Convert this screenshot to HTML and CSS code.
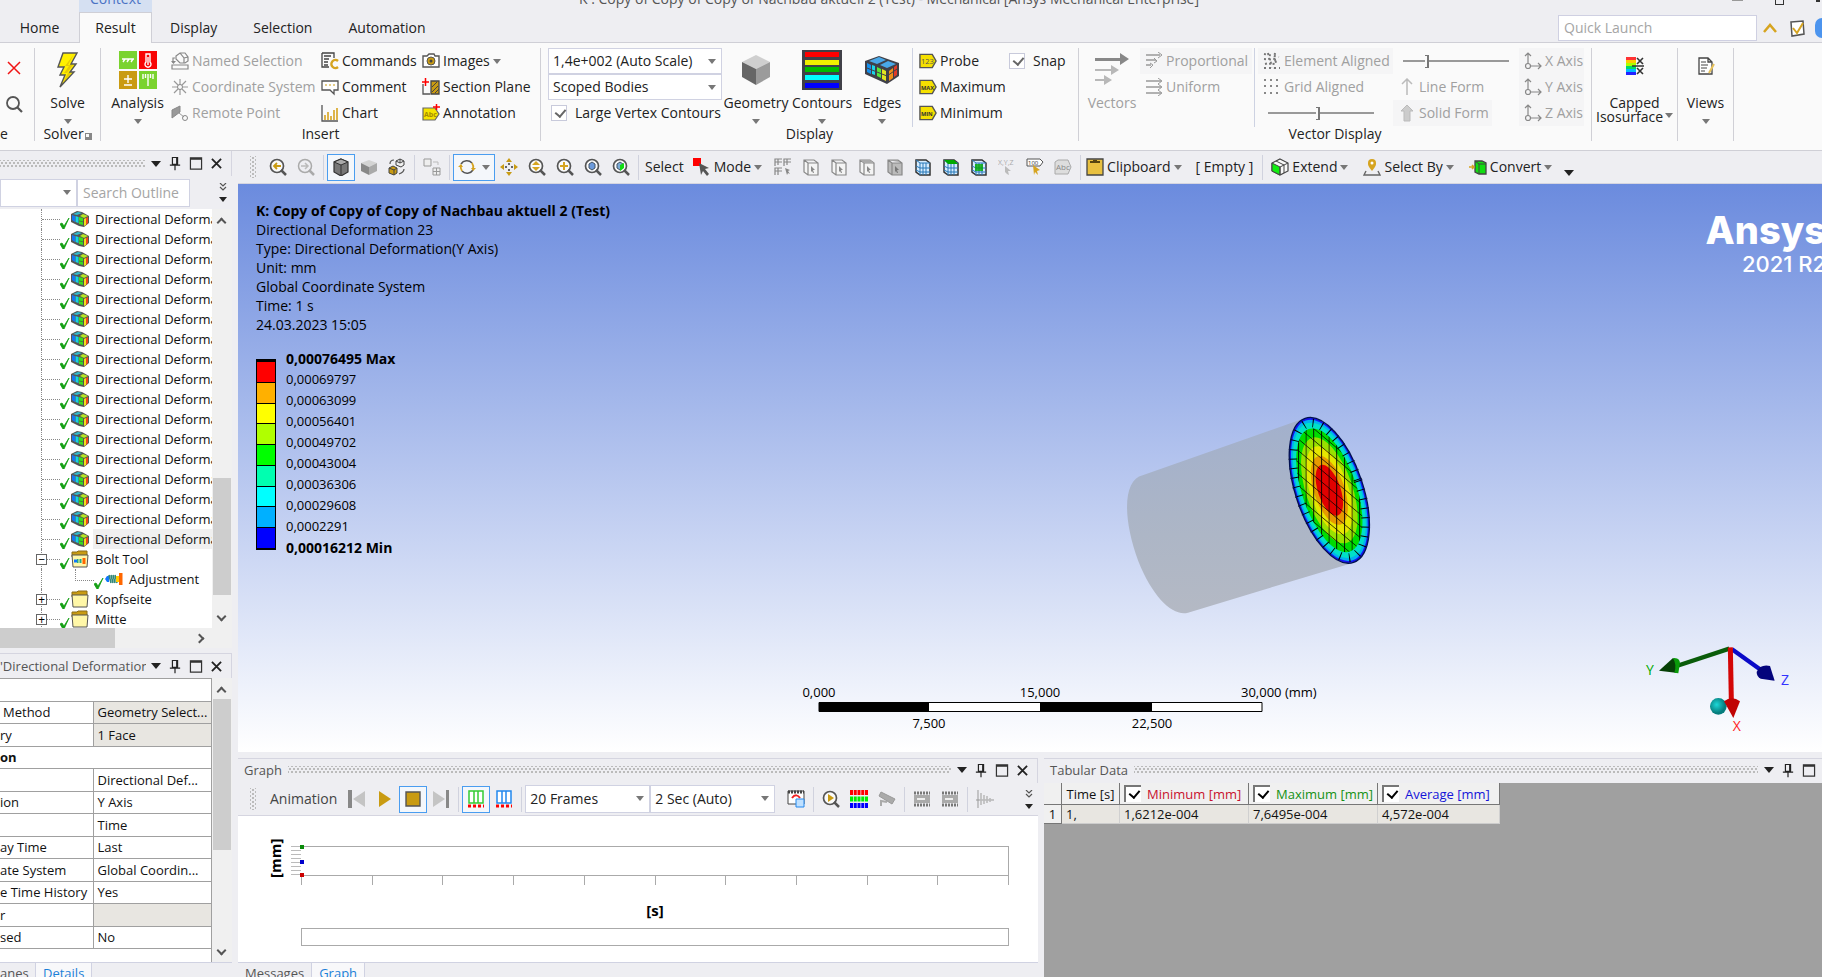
FILE: index.html
```html
<!DOCTYPE html>
<html lang="en">
<head>
    <meta charset="UTF-8">
    <meta name="viewport" content="width=device-width, initial-scale=1.0">
    <title>Mechanical</title>
    <link rel="stylesheet" href="styles.css">
</head>
<body>
    <!-- Icon sprite -->
    <svg class="sprite" aria-hidden="true">
        <symbol id="i-cross" viewBox="0 0 18 18"><path d="M3 3l12 12M15 3L3 15" stroke="#f01414" stroke-width="1.5" fill="none"/></symbol>
        <symbol id="i-search" viewBox="0 0 18 18"><g fill="none" stroke="#555"><circle cx="8" cy="8" r="6" stroke-width="1.8"/><path d="M12 12l5 5" stroke-width="2.2"/></g></symbol>
        <symbol id="i-bolt" viewBox="0 0 24 36"><path d="M7 1h14l-6 11h5l-6 8h4L4 35l5-12H4l4-8H2z" fill="#fff000" stroke="#555" stroke-width="1.4"/><path d="M18 2l-6 11h5l-6 8h4L7 31l5-10H8l5-7H9z" fill="#c99c10" opacity=".45"/></symbol>
        <symbol id="i-analysis" viewBox="0 0 38 38"><path d="M0 0h18v18H0zM20 20h18v18H20z" fill="#7ad32e"/><path d="M20 0h18v18H20z" fill="#f80505"/><path d="M0 20h18v18H0z" fill="#c99b12"/><g fill="none" stroke="#fff" stroke-width="1.4"><path d="M3 8h12M6 8l-2 3M10 8l-2 3M14 8l-2 3M5 28h8M9 24v8M5 34h8M29 23v12M24 23v5M34 23v5M26.5 23v4M31.5 23v4"/><path d="M27 3h4v8a3 3 0 1 1-4 0zM29 6v8"/></g></symbol>
        <symbol id="i-named" viewBox="0 0 18 18"><g fill="none" stroke="#888" stroke-width="1.2"><path d="M5 4l4-3h5l3 4v4l-3 2H9L5 7zM9 1l4 5v5M13 6l4-1M1 13h16v4H1zM2 11V6h2"/></g><path d="M0 9h5l-2.500 3z" fill="#888"/></symbol>
        <symbol id="i-coord" viewBox="0 0 18 18"><path d="M9 1v16M1 9h16M3 3l12 12M15 3L3 15" stroke="#999" stroke-width="1.2"/><circle cx="9" cy="9" r="2.5" fill="#fafafa" stroke="#888"/></symbol>
        <symbol id="i-remote" viewBox="0 0 18 18"><path d="M1 6l8-4v6l-8 6z" fill="#999" stroke="#888"/><path d="M8 9l5 4" stroke="#999"/><circle cx="14" cy="14" r="2.5" fill="none" stroke="#888"/></symbol>
        <symbol id="i-commands" viewBox="0 0 18 18"><path d="M1 1h12v5M1 1v14h7" fill="none" stroke="#444" stroke-width="1.3"/><path d="M3 4h7M3 7h5M3 10h4M3 13h4" stroke="#444" stroke-width="1.3"/><path d="M17 9a4 4 0 1 0 0 6" fill="none" stroke="#d6a420" stroke-width="2.4"/></symbol>
        <symbol id="i-comment" viewBox="0 0 18 18"><path d="M1 3h16v9h-4v4l-4-4H1z" fill="#fff" stroke="#555" stroke-width="1.3"/><path d="M4 7h2M8 7h2M12 7h2" stroke="#c99b12"/></symbol>
        <symbol id="i-chart" viewBox="0 0 18 18"><path d="M1 1v16h16" fill="none" stroke="#555" stroke-width="1.3"/><path d="M4 11v5M7 8v8M10 12v4M13 6v10M16 4v12" stroke="#d6a420" stroke-width="1.6"/></symbol>
        <symbol id="i-images" viewBox="0 0 18 18"><path d="M1 4h4l2-2h5l1 2h4v11H1z" fill="#fff" stroke="#555" stroke-width="1.4"/><circle cx="9" cy="9" r="4" fill="#c99b12" stroke="#555"/><circle cx="9" cy="9" r="1.5" fill="#444"/></symbol>
        <symbol id="i-section" viewBox="0 0 18 18"><path d="M1 6v10h7" fill="none" stroke="#555" stroke-width="1.3"/><path d="M9 3h8v13H9z" fill="#c99b12" stroke="#444" stroke-width="1.3"/><path d="M10 9l5-5M10 14l6-6M13 15l4-4" stroke="#444"/><path d="M0 4h7M3.5 0v8" stroke="#f00" stroke-width="1.5"/></symbol>
        <symbol id="i-annot" viewBox="0 0 18 18"><path d="M1 4h12l4 6-4 6H1z" fill="#f5e400" stroke="#666" stroke-width="1.2"/><text x="2" y="13" font-size="7" font-weight="bold" fill="#a58b00">Abc</text><path d="M11 3h7M14.5 0v6" stroke="#f00" stroke-width="1.5"/></symbol>
        <symbol id="i-cube" viewBox="0 0 30 30"><path d="M15 0l14 7-14 7L1 7z" fill="#cfcfcf"/><path d="M1 7l14 7v16L1 22z" fill="#666"/><path d="M29 7l-14 7v16l14-8z" fill="#9b9b9b"/></symbol>
        <symbol id="i-contours" viewBox="0 0 40 40"><path d="M0 0h40v40H0z" fill="#404048"/><path d="M3 2h34v5H3z" fill="#f00"/><path d="M3 10h34v5H3z" fill="#f0f000"/><path d="M3 17h34v5H3z" fill="#0b0"/><path d="M3 25h34v5H3z" fill="#0ff"/><path d="M3 33h34v5H3z" fill="#00f"/></symbol>
        <symbol id="i-edges" viewBox="0 0 36 30"><path d="M1 6l14-5 20 7v13l-12 8L1 19z" fill="#404048"/><path d="M5 6l10-4 7 3-9 4zM16 10l8-4 8 3-9 4z" fill="#49a8e8"/><path d="M3 8l4 2v9l-4-2z" fill="#1590ee"/><path d="M8 10l3 1v9l-3-1z" fill="#1ad7e8"/><path d="M13 12l4 2v9l-4-2z" fill="#57e83a"/><path d="M18 14l4 2v10l-4-2z" fill="#e3e620"/><path d="M25 16l4-3v10l-4 3z" fill="#f09018"/><path d="M30 12l3-2v10l-3 2z" fill="#e23b28"/><path d="M3 13l20 8 10-7" fill="none" stroke="#404048" stroke-width="1"/></symbol>
        <symbol id="i-probe" viewBox="0 0 19 16"><path d="M1 1h13l4 7-4 7H1z" fill="#f5e000" stroke="#555" stroke-width="1.5"/><text x="2" y="11" font-size="8" fill="#555">123</text></symbol>
        <symbol id="i-max" viewBox="0 0 19 16"><path d="M1 1h13l4 7-4 7H1z" fill="#f5e000" stroke="#555" stroke-width="1.5"/><text x="2" y="11" font-size="6" font-weight="bold" fill="#333">MAX</text></symbol>
        <symbol id="i-min" viewBox="0 0 19 16"><path d="M1 1h13l4 7-4 7H1z" fill="#f5e000" stroke="#555" stroke-width="1.5"/><text x="2" y="11" font-size="6" font-weight="bold" fill="#333">MIN</text></symbol>
        <symbol id="i-vectors" viewBox="0 0 34 34"><path d="M0 5h25V0l9 6-9 6V8H0z" fill="#888"/><path d="M0 16h16v-4l8 5-8 5v-4H0zM0 26h9v-4l8 5-8 5v-4H0z" fill="#b8b8b8"/></symbol>
        <symbol id="i-prop" viewBox="0 0 18 18"><g stroke="#999" fill="none"><path d="M1 3h14M1 8h10M1 13h5" stroke-width="1.3"/><path d="M13 0l4 3-4 3M9 6l3 3-3 2M5 11l3 2-3 3"/></g></symbol>
        <symbol id="i-uniform" viewBox="0 0 18 18"><g stroke="#999" fill="none"><path d="M1 3h15M1 9h15M1 15h15" stroke-width="1.3"/><path d="M13 0l4 3-4 3M13 12l4 3-4 3M13 6l4 3-4 3"/></g></symbol>
        <symbol id="i-elem" viewBox="0 0 18 18"><g stroke="#777" stroke-width="2" stroke-dasharray="2 3" fill="none"><path d="M1 2l15 3M1 7l15 1M2 12l14-3M1 16h16M5 1l3 15M12 1l-2 15"/></g></symbol>
        <symbol id="i-grid" viewBox="0 0 18 18"><g stroke="#888" stroke-width="2" stroke-dasharray="2 4" fill="none"><path d="M1 2h16M1 8h16M1 15h16"/></g></symbol>
        <symbol id="i-line" viewBox="0 0 18 18"><path d="M9 17V1M4 6l5-5 5 5" stroke="#bbb" stroke-width="1.5" fill="none"/></symbol>
        <symbol id="i-solid" viewBox="0 0 18 18"><path d="M9 1l6 6h-3v10H6V7H3z" fill="#ccc" stroke="#bbb"/></symbol>
        <symbol id="i-axis" viewBox="0 0 18 18"><g stroke="#888" fill="none" stroke-width="1.2"><path d="M4 12V1M1 4l3-3 3 3M7 14h10M14 11l3 3-3 3"/><circle cx="4" cy="14" r="2.5"/></g></symbol>
        <symbol id="i-capped" viewBox="0 0 18 18"><path d="M0 0h10v4H0z" fill="#f33"/><path d="M0 3h10v4H0z" fill="#fc0"/><path d="M0 6h10v3H0z" fill="#af0"/><path d="M0 9h10v3H0z" fill="#0d6"/><path d="M0 12h10v3H0z" fill="#0bf"/><path d="M0 15h10v3H0z" fill="#22f"/><path d="M11 1l6 6M17 1l-6 6M11 11l6 6M17 11l-6 6M6 9h12" stroke="#333" stroke-width="1.6"/></symbol>
        <symbol id="i-views" viewBox="0 0 18 18"><path d="M2 1h9l4 4v12H2zM11 1v4h4" fill="#fff" stroke="#444" stroke-width="1.3"/><path d="M4 5h5M4 8h7M4 11h6M4 14h4" stroke="#444"/><path d="M17 7l-5 9" stroke="#e8c25a" stroke-width="2"/></symbol>
        <symbol id="i-up" viewBox="0 0 14 10"><path d="M1 9l6-7 6 7" fill="none" stroke="#d6a420" stroke-width="2.5"/></symbol>
        <symbol id="i-clipcheck" viewBox="0 0 18 18"><path d="M3 3l12-1 1 13-12 2z" fill="#fff" stroke="#555" stroke-width="1.5"/><path d="M5 9l4 5 6-10" stroke="#d6a420" stroke-width="2" fill="none"/></symbol>
        <symbol id="i-pin" viewBox="0 0 14 16"><path d="M4 1h6v8H4zM9 1v8M1 10h12M7 10v6" fill="none" stroke="#222" stroke-width="1.4"/></symbol>
        <symbol id="i-box" viewBox="0 0 14 14"><path d="M1 1h12v12H1z" fill="none" stroke="#333" stroke-width="1.3"/><path d="M1 2h12" stroke="#333" stroke-width="2"/></symbol>
        <symbol id="i-x" viewBox="0 0 12 12"><path d="M1 1l10 10M11 1L1 11" stroke="#222" stroke-width="2"/></symbol>
        <symbol id="i-chevs" viewBox="0 0 8 8"><path d="M1 0l3 3 3-3M1 4l3 3 3-3" fill="none" stroke="#555" stroke-width="1.2"/></symbol>
        <symbol id="i-tri" viewBox="0 0 10 6"><path d="M0 0h10L5 6z" fill="currentColor"/></symbol>
        <symbol id="i-check" viewBox="0 0 10 12"><path d="M0 7l2-1 2 3 5-8-5 11H3z" fill="#14a014" stroke="#14a014" stroke-width=".8"/></symbol>
        <symbol id="i-def" viewBox="0 0 18 16"><path d="M0 3l6-3 5 1 7 4v7l-5 4-5-1-8-4z" fill="#555"/><path d="M1 4l3 1v6l-3-2z" fill="#1877f0"/><path d="M4.500 5l3 1v6l-3-1z" fill="#16d3e6"/><path d="M2 3l5-2 4 1-5 2z" fill="#3bc"/><path d="M8 6l4 1v7l-4-1z" fill="#3bdc1e"/><path d="M9 5l3-2 5 2-4 2z" fill="#b6e522"/><path d="M13 8l2-1v7l-2 1z" fill="#ece21c"/><path d="M15 7l2-1v6l-2 2z" fill="#f04a1c"/><path d="M8 10l5 1" stroke="#444" stroke-width=".6"/></symbol>
        <symbol id="i-folder" viewBox="0 0 18 18"><path d="M1 2h5l1-1h9v6H1z" fill="#c99b12" stroke="#8a6d18"/><path d="M1 5h16l-1 12H2z" fill="#fff7a8" stroke="#555"/></symbol>
        <symbol id="i-bolttool" viewBox="0 0 18 18"><path d="M1 2h5l1-1h9v6H1z" fill="#c99b12" stroke="#8a6d18"/><path d="M1 5h16l-1 12H2z" fill="#fff7a8" stroke="#555"/><path d="M3 11h3" stroke="#17f" stroke-width="3"/><path d="M6 11h5" stroke="#2a8" stroke-width="4" stroke-dasharray="1 .5"/><path d="M13 8v6" stroke="#f60" stroke-width="3"/></symbol>
        <symbol id="i-adjust" viewBox="0 0 18 14"><path d="M0 7l2-3h2v6H2z" fill="#17f"/><path d="M4 3l2 8M6 3l2 8M8 3l2 8M10 3l2 8" stroke="#387" stroke-width="1.6"/><path d="M11 4h3v6h-3z" fill="#fc0"/><path d="M14 1h3.500v12H14z" fill="#f60"/></symbol>
        <symbol id="i-zprev" viewBox="0 0 18 18"><circle cx="8" cy="8" r="6.5" fill="#fafafa" stroke="#555" stroke-width="1.7"/><path d="M12 12l5 5" stroke="#555" stroke-width="2.5"/><path d="M12 8H5M8 5L5 8l3 3" fill="none" stroke="#c99b12" stroke-width="1.8"/></symbol>
        <symbol id="i-znext" viewBox="0 0 18 18"><circle cx="8" cy="8" r="6.5" fill="none" stroke="#aaa" stroke-width="1.5"/><path d="M12 12l5 5" stroke="#aaa" stroke-width="2.5"/><path d="M4 8h7M8 5l3 3-3 3" fill="none" stroke="#bbb" stroke-width="1.5"/></symbol>
        <symbol id="i-shade" viewBox="0 0 18 18"><path d="M9 1l7 3v10l-7 4-7-4V4z" fill="#777" stroke="#333" stroke-width="1.2"/><path d="M9 1l7 3-7 3-7-3z" fill="#aaa" stroke="#333"/><path d="M9 7v10" stroke="#333"/></symbol>
        <symbol id="i-softcube" viewBox="0 0 18 18"><path d="M9 2l8 3-8 4-8-4z" fill="#d4d4d4"/><path d="M1 5l8 4v8l-8-4z" fill="#888"/><path d="M17 5L9 9v8l8-4z" fill="#aaa"/></symbol>
        <symbol id="i-swap" viewBox="0 0 18 18"><path d="M8 3l4-2 4 2v4l-3 2-5-2zM12 5V1M8 3l4 2 4-2" fill="#eee" stroke="#444"/><path d="M1 10l4-2 4 2v5l-3 2-5-2z" fill="#c99b12" stroke="#444"/><path d="M1 10l5 2 3-2M6 12v5" fill="none" stroke="#444"/><path d="M2 6c0-3 2-4 4-4M16 11c0 3-2 4-5 5" fill="none" stroke="#555" stroke-width="1.2"/></symbol>
        <symbol id="i-pair" viewBox="0 0 18 18"><path d="M1 1h7v7H1zM10 10h7v7h-7zM13.5 10v7M10 13.5h7" fill="#eee" stroke="#999"/><path d="M10 4h5v3" fill="none" stroke="#bbb"/></symbol>
        <symbol id="i-rotate" viewBox="0 0 18 18"><path d="M3 6a7 7 0 0 1 11-1M15 12a7 7 0 0 1-11 1" fill="none" stroke="#555" stroke-width="1.6"/><path d="M14 5a7 7 0 0 1 1 6M4 13a7 7 0 0 1-1-6" fill="none" stroke="#d6a420" stroke-width="1.8"/><path d="M13 10h5l-3 3zM0 9l3-3 2 3z" fill="#d6a420"/></symbol>
        <symbol id="i-pan" viewBox="0 0 18 18"><g fill="#c99b12"><path d="M9 0l3 4H6zM9 18l3-4H6zM0 9l4-3v6zM18 9l-4-3v6z"/></g><path d="M9 5v2M9 11v2M5 9h2M11 9h2" stroke="#666" stroke-width="2"/></symbol>
        <symbol id="i-zoom" viewBox="0 0 18 18"><circle cx="8" cy="8" r="6.5" fill="#fafafa" stroke="#555" stroke-width="1.7"/><path d="M12 12l5 5" stroke="#555" stroke-width="2.5"/><path d="M8 3l4 4H4zM8 13l4-4H4z" fill="#d6a420"/></symbol>
        <symbol id="i-zplus" viewBox="0 0 18 18"><circle cx="8" cy="8" r="6.5" fill="#fafafa" stroke="#555" stroke-width="1.7"/><path d="M12 12l5 5" stroke="#555" stroke-width="2.5"/><path d="M8 4v8M4 8h8" stroke="#d6a420" stroke-width="2"/></symbol>
        <symbol id="i-zfit" viewBox="0 0 18 18"><circle cx="8" cy="8" r="6.5" fill="#fafafa" stroke="#555" stroke-width="1.7"/><path d="M12 12l5 5" stroke="#555" stroke-width="2.5"/><path d="M8 4l3 2v4l-3 2-3-2V6z" fill="#6d9bdc" stroke="#456"/></symbol>
        <symbol id="i-zsel" viewBox="0 0 18 18"><circle cx="8" cy="8" r="6.5" fill="#fafafa" stroke="#555" stroke-width="1.7"/><path d="M12 12l5 5" stroke="#555" stroke-width="2.5"/><path d="M8 4l3 2v4l-3 2-3-2V6z" fill="#7cacd8" stroke="#456"/><path d="M8 7l4-2v5l-4 3z" fill="#1d1"/></symbol>
        <symbol id="i-mode" viewBox="0 0 18 18"><path d="M0 0h8v8H0z" fill="#f00"/><path d="M6 5l10 5-4 1 4 5-2 2-4-5-2 4z" fill="#555"/></symbol>
        <symbol id="i-filter" viewBox="0 0 18 18"><g fill="none" stroke="#888" stroke-width="1.2"><path d="M1 8V1h7M1 4h7M4 1v6M10 8V1h7M10 4h7M13 1v6M1 17v-7h7M1 13h7M4 10v7"/></g><path d="M11 10l5 2-2 1 2 3-2-1-1 2z" fill="#888"/></symbol>
        <symbol id="i-sbox" viewBox="0 0 18 18"><path d="M2 2h10l4 3v12H6l-4-3zM2 2l4 3h10M6 5v12" fill="#f4f4f4" stroke="#888" stroke-width="1.2"/><path d="M9 8l4 4h-2l1 3h-1l-1-2-1 1z" fill="#888"/></symbol>
        <symbol id="i-sbody" viewBox="0 0 18 18"><path d="M2 2h10l4 3v12H6l-4-3zM2 2l4 3h10M6 5v12" fill="#bbb" stroke="#888" stroke-width="1.2"/><path d="M9 8l4 4h-2l1 3h-1l-1-2-1 1z" fill="#777"/></symbol>
        <symbol id="i-mesh" viewBox="0 0 18 18"><path d="M2 2h10l4 3v12H6l-4-3z" fill="#d6ecff" stroke="#333" stroke-width="1.5"/><path d="M2 2l4 3h10M6 5v12M9 5v12M12 5v12M2 8l4 2h10M2 12l4 2h10" fill="none" stroke="#2878b8"/></symbol>
        <symbol id="i-xyz" viewBox="0 0 18 18"><text x="0" y="7" font-size="7" fill="#aaa">X,Y,Z</text><path d="M7 8l6 5h-3l1 4-2-1-2-2z" fill="#bbb"/></symbol>
        <symbol id="i-tag" viewBox="0 0 18 18"><path d="M1 1h13l3 3-3 4H1z" fill="#fff" stroke="#555"/><text x="2" y="7" font-size="6" fill="#333">100</text><path d="M7 7l7 5-3 1 1 4-3-3-1 3z" fill="#d6a420"/></symbol>
        <symbol id="i-abc" viewBox="0 0 18 18"><path d="M1 4l3-2h10l3 7-3 7H1z" fill="#ddd" stroke="#aaa"/><text x="2" y="12" font-size="8" fill="#888">Abc</text></symbol>
        <symbol id="i-clip" viewBox="0 0 18 18"><path d="M1 1h16v16H1z" fill="#e8c040" stroke="#444" stroke-width="1.3"/><path d="M4 4h10M7 3h4" stroke="#554410" stroke-width="1.8"/></symbol>
        <symbol id="i-extend" viewBox="0 0 18 18"><path d="M9 1l8 4v8l-8 4-8-4V5z" fill="#f8f8f8" stroke="#444" stroke-width="1.2"/><path d="M1 5l8 4v8l-8-4z" fill="#1e1" stroke="#444"/><path d="M17 5L9 9v8M5 3l8 4v8" fill="none" stroke="#444"/></symbol>
        <symbol id="i-selby" viewBox="0 0 18 18"><path d="M9 13C5 8 5 7 5 5a4 4 0 0 1 8 0c0 2 0 3-4 8z" fill="#d6a420"/><circle cx="9" cy="5" r="1.5" fill="#fff"/><path d="M3 13l-2 4h16l-2-4" fill="none" stroke="#666" stroke-width="1.4"/></symbol>
        <symbol id="i-convert" viewBox="0 0 18 18"><path d="M6 3h7l4 2v11h-7l-4-2z" fill="#1d1" stroke="#444" stroke-width="1.3"/><path d="M6 3l4 3h7M10 6v10" fill="none" stroke="#444"/><path d="M0 9h5M3 7l2 2-2 2" stroke="#d6a420" stroke-width="1.5" fill="none"/></symbol>
        <symbol id="i-first" viewBox="0 0 18 18"><path d="M0 0h4v18H0z" fill="#888"/><path d="M17 1v16L5 9z" fill="#c4c4c4"/></symbol>
        <symbol id="i-play" viewBox="0 0 18 18"><path d="M3 1l12 8-12 8z" fill="#c99b12"/></symbol>
        <symbol id="i-stop" viewBox="0 0 18 18"><path d="M2 2h14v14H2z" fill="#c99b12" stroke="#555" stroke-width="1.4"/></symbol>
        <symbol id="i-last" viewBox="0 0 18 18"><path d="M14 0h3v18h-3z" fill="#888"/><path d="M1 1v16l12-8z" fill="#c4c4c4"/></symbol>
        <symbol id="i-frames" viewBox="0 0 18 18"><path d="M2 1h14v12H2zM7 1v12M11 1v12" fill="#fff" stroke="currentColor" stroke-width="1.5"/><path d="M1 16h16" stroke="#f00" stroke-width="3" stroke-dasharray="3 2"/></symbol>
        <symbol id="i-film" viewBox="0 0 18 18"><path d="M1 1h16v13H1z" fill="#fff" stroke="#444"/><path d="M1 2h16" stroke="#444" stroke-width="3" stroke-dasharray="2 1"/><path d="M5 8c3-4 6-3 8 0" fill="none" stroke="#e22" stroke-width="2"/><path d="M9 9h8v8H9z" fill="#bfe0ff" stroke="#28e"/></symbol>
        <symbol id="i-zplay" viewBox="0 0 18 18"><circle cx="8" cy="8" r="6.5" fill="#fafafa" stroke="#555" stroke-width="1.7"/><path d="M12 12l5 5" stroke="#555" stroke-width="2.5"/><path d="M6 4l6 4-6 4z" fill="#c99b12"/></symbol>
        <symbol id="i-rgb" viewBox="0 0 18 18"><g stroke-width="5" stroke-dasharray="3 .75"><path d="M0 2.5h18" stroke="#f00"/><path d="M0 9h18" stroke="#0e0"/><path d="M0 15.5h18" stroke="#00f"/></g></symbol>
        <symbol id="i-cam" viewBox="0 0 18 18"><path d="M3 2l14 7-3 5L1 6z" fill="#aaa" stroke="#999"/><path d="M3 16v-5l6 1" fill="none" stroke="#aaa" stroke-width="2"/></symbol>
        <symbol id="i-key" viewBox="0 0 18 18"><path d="M1 3h16M1 15h16" stroke="#777" stroke-width="3" stroke-dasharray="2 1"/><path d="M1 5h16v8H1z" fill="#aaa"/><path d="M4 9h8" stroke="#eee" stroke-width="2"/></symbol>
        <symbol id="i-wave" viewBox="0 0 18 18"><path d="M2 0v18M0 10h18" stroke="#999"/><path d="M5 3v12M8 5v9M11 6v7M14 8v4" stroke="#bbb" stroke-width="1.6"/></symbol>
    </svg>

    <header class="app-header">
        <div class="title-row">
            <span class="context">Context</span>
            <span class="title">K : Copy of Copy of Copy of Nachbau aktuell 2 (Test) - Mechanical [Ansys Mechanical Enterprise]</span>
            <span class="win"><i class="win-min"></i><i class="win-max"></i><i class="win-close"></i></span>
        </div>
        <nav class="tabs-row">
            <button class="rtab home">Home</button>
            <button class="rtab active">Result</button>
            <button class="rtab">Display</button>
            <button class="rtab">Selection</button>
            <button class="rtab">Automation</button>
            <span class="spacer"></span>
            <input class="quick" type="text" placeholder="Quick Launch" aria-label="Quick Launch">
            <svg class="up"><use href="#i-up"/></svg>
            <svg class="ic"><use href="#i-clipcheck"/></svg>
            <i class="help"></i>
        </nav>
    </header>

    <div class="ribbon">
        <div class="group g-tools">
            <div class="g-body g-stack">
                <button aria-label="Delete"><svg class="ic"><use href="#i-cross"/></svg></button>
                <button aria-label="Find"><svg class="ic"><use href="#i-search"/></svg></button>
            </div>
            <div class="g-label">e</div>
        </div>
        <div class="group g-solver">
            <div class="g-body">
                <button class="big"><span class="pic"><svg width="24" height="36"><use href="#i-bolt"/></svg></span>Solve<svg class="tri"><use href="#i-tri"/></svg></button>
            </div>
            <div class="g-label">Solver<i class="launcher"></i></div>
        </div>
        <div class="group g-insert">
            <div class="g-body">
                <button class="big w61"><span class="pic"><svg width="38" height="38"><use href="#i-analysis"/></svg></span>Analysis<svg class="tri"><use href="#i-tri"/></svg></button>
                <div class="col w150">
                    <button class="cmd" disabled><svg class="ic"><use href="#i-named"/></svg>Named Selection</button>
                    <button class="cmd" disabled><svg class="ic"><use href="#i-coord"/></svg>Coordinate System</button>
                    <button class="cmd" disabled><svg class="ic"><use href="#i-remote"/></svg>Remote Point</button>
                </div>
                <div class="col w101">
                    <button class="cmd"><svg class="ic"><use href="#i-commands"/></svg>Commands</button>
                    <button class="cmd"><svg class="ic"><use href="#i-comment"/></svg>Comment</button>
                    <button class="cmd"><svg class="ic"><use href="#i-chart"/></svg>Chart</button>
                </div>
                <div class="col">
                    <button class="cmd"><svg class="ic"><use href="#i-images"/></svg>Images<svg class="tri"><use href="#i-tri"/></svg></button>
                    <button class="cmd"><svg class="ic"><use href="#i-section"/></svg>Section Plane</button>
                    <button class="cmd"><svg class="ic"><use href="#i-annot"/></svg>Annotation</button>
                </div>
            </div>
            <div class="g-label">Insert</div>
        </div>
        <div class="group g-display">
            <div class="g-body">
                <div class="col w174">
                    <span class="combo"><select aria-label="Scale"><option>1,4e+002 (Auto Scale)</option></select></span>
                    <span class="combo"><select aria-label="Bodies"><option>Scoped Bodies</option></select></span>
                    <label class="tick"><input type="checkbox" checked>Large Vertex Contours</label>
                </div>
                <button class="big w68"><span class="pic"><svg width="30" height="30"><use href="#i-cube"/></svg></span>Geometry<svg class="tri"><use href="#i-tri"/></svg></button>
                <button class="big w64"><span class="pic"><svg width="40" height="40"><use href="#i-contours"/></svg></span>Contours<svg class="tri"><use href="#i-tri"/></svg></button>
                <button class="big w56"><span class="pic"><svg width="36" height="30"><use href="#i-edges"/></svg></span>Edges<svg class="tri"><use href="#i-tri"/></svg></button>
                <i class="vline"></i>
                <div class="col w90">
                    <button class="cmd"><svg class="ic"><use href="#i-probe"/></svg>Probe</button>
                    <button class="cmd"><svg class="ic"><use href="#i-max"/></svg>Maximum</button>
                    <button class="cmd"><svg class="ic"><use href="#i-min"/></svg>Minimum</button>
                </div>
                <div class="col"><label class="tick"><input type="checkbox" checked>Snap</label></div>
            </div>
            <div class="g-label">Display</div>
        </div>
        <div class="group g-vector">
            <div class="g-body">
                <button class="big w56" disabled><span class="pic"><svg width="34" height="34"><use href="#i-vectors"/></svg></span>Vectors</button>
                <div class="col w112">
                    <button class="cmd on" disabled><svg class="ic"><use href="#i-prop"/></svg>Proportional</button>
                    <button class="cmd" disabled><svg class="ic"><use href="#i-uniform"/></svg>Uniform</button>
                </div>
                <i class="vline"></i>
                <div class="col w135">
                    <button class="cmd on" disabled><svg class="ic"><use href="#i-elem"/></svg>Element Aligned</button>
                    <button class="cmd" disabled><svg class="ic"><use href="#i-grid"/></svg>Grid Aligned</button>
                    <input class="slider" type="range" min="0" max="100" value="47" aria-label="Density">
                </div>
                <div class="col w126">
                    <input class="slider" type="range" min="0" max="100" value="22" aria-label="Length">
                    <button class="cmd" disabled><svg class="ic"><use href="#i-line"/></svg>Line Form</button>
                    <button class="cmd on fit" disabled><svg class="ic"><use href="#i-solid"/></svg>Solid Form</button>
                </div>
                <div class="col w65">
                    <button class="cmd on" disabled><svg class="ic"><use href="#i-axis"/></svg>X Axis</button>
                    <button class="cmd on" disabled><svg class="ic"><use href="#i-axis"/></svg>Y Axis</button>
                    <button class="cmd on" disabled><svg class="ic"><use href="#i-axis"/></svg>Z Axis</button>
                </div>
            </div>
            <div class="g-label">Vector Display</div>
        </div>
        <div class="group g-capped">
            <div class="g-body">
                <button class="big two"><span class="pic"><svg width="18" height="18"><use href="#i-capped"/></svg></span><span>Capped<br>Isosurface<svg class="tri"><use href="#i-tri"/></svg></span></button>
            </div>
        </div>
        <div class="group g-views">
            <div class="g-body">
                <button class="big"><span class="pic short"><svg width="18" height="18"><use href="#i-views"/></svg></span>Views<svg class="tri"><use href="#i-tri"/></svg></button>
            </div>
        </div>
    </div>

    <main class="workspace">
        <aside class="side">
            <div class="panel-head">
                <span class="dots"></span>
                <svg class="tri dark"><use href="#i-tri"/></svg><svg class="pin"><use href="#i-pin"/></svg><svg class="box"><use href="#i-box"/></svg><svg class="x"><use href="#i-x"/></svg>
            </div>
            <div class="outline-bar">
                <span class="combo filter"><select aria-label="Filter"><option></option></select></span>
                <input type="text" placeholder="Search Outline" aria-label="Search Outline">
                <span class="more"><svg class="chevs"><use href="#i-chevs"/></svg><svg class="tri dark"><use href="#i-tri"/></svg></span>
            </div>
            <div class="tree-wrap">
                <ul class="tree" id="tree"></ul>
                <div class="vscroll tree-scroll"><i class="chev chev-up"></i><i class="thumb"></i><i class="chev chev-down"></i></div>
            </div>
            <div class="hscroll"><i class="thumb"></i><i class="chev chev-right"></i></div>

            <div class="panel-head details-head">
                <span class="cut">'Directional Deformation 23'</span>
                <svg class="tri dark"><use href="#i-tri"/></svg><svg class="pin"><use href="#i-pin"/></svg><svg class="box"><use href="#i-box"/></svg><svg class="x"><use href="#i-x"/></svg>
            </div>
            <div class="details-wrap">
                <div class="details-box">
                    <table class="details">
                        <colgroup><col class="name"><col></colgroup>
                        <tr><th colspan="2"></th></tr>
                        <tr><td class="ind">Method</td><td class="ro">Geometry Select...</td></tr>
                        <tr><td>ry</td><td class="ro">1 Face</td></tr>
                        <tr><th colspan="2">on</th></tr>
                        <tr><td></td><td>Directional Def...</td></tr>
                        <tr><td>ion</td><td>Y Axis</td></tr>
                        <tr><td></td><td>Time</td></tr>
                        <tr><td>ay Time</td><td>Last</td></tr>
                        <tr><td>ate System</td><td>Global Coordin...</td></tr>
                        <tr><td>e Time History</td><td>Yes</td></tr>
                        <tr><td>r</td><td class="ro"></td></tr>
                        <tr><td>sed</td><td>No</td></tr>
                    </table>
                </div>
                <div class="vscroll details-scroll"><i class="chev chev-up"></i><i class="thumb"></i><i class="chev chev-down"></i></div>
            </div>
            <div class="btabs"><button class="btab w36">anes</button><button class="btab active">Details</button></div>
        </aside>

        <section class="content">
            <div class="toolbar">
                <i class="grip"></i>
                <button class="tb"><svg class="ic"><use href="#i-zprev"/></svg></button>
                <button class="tb"><svg class="ic"><use href="#i-znext"/></svg></button>
                <i class="sep"></i>
                <button class="tb sel"><svg class="ic"><use href="#i-shade"/></svg></button>
                <button class="tb"><svg class="ic"><use href="#i-softcube"/></svg></button>
                <button class="tb"><svg class="ic"><use href="#i-swap"/></svg></button>
                <i class="sep"></i>
                <button class="tb"><svg class="ic"><use href="#i-pair"/></svg></button>
                <i class="sep"></i>
                <button class="tb sel wide"><svg class="ic"><use href="#i-rotate"/></svg><svg class="tri"><use href="#i-tri"/></svg></button>
                <button class="tb"><svg class="ic"><use href="#i-pan"/></svg></button>
                <button class="tb"><svg class="ic"><use href="#i-zoom"/></svg></button>
                <button class="tb"><svg class="ic"><use href="#i-zplus"/></svg></button>
                <button class="tb"><svg class="ic"><use href="#i-zfit"/></svg></button>
                <button class="tb"><svg class="ic"><use href="#i-zsel"/></svg></button>
                <i class="sep"></i>
                <span class="tb-label">Select</span>
                <button class="tbt mode"><svg class="ic"><use href="#i-mode"/></svg>Mode<svg class="tri"><use href="#i-tri"/></svg></button>
                <button class="tb"><svg class="ic"><use href="#i-filter"/></svg></button>
                <button class="tb"><svg class="ic"><use href="#i-sbox"/></svg></button>
                <button class="tb"><svg class="ic"><use href="#i-sbox"/></svg></button>
                <button class="tb"><svg class="ic"><use href="#i-sbox"/><path d="M2 2h10l4 3H6z" fill="#aaa"/></svg></button>
                <button class="tb"><svg class="ic"><use href="#i-sbody"/></svg></button>
                <button class="tb"><svg class="ic"><use href="#i-mesh"/></svg></button>
                <button class="tb"><svg class="ic"><use href="#i-mesh"/><path d="M2 2h10l4 4H6z" fill="#0a0"/></svg></button>
                <button class="tb"><svg class="ic"><use href="#i-mesh"/><path d="M5 6h8v7H5z" fill="#0a0" fill-opacity=".8"/></svg></button>
                <button class="tb"><svg class="ic"><use href="#i-xyz"/></svg></button>
                <button class="tb"><svg class="ic"><use href="#i-tag"/></svg></button>
                <button class="tb"><svg class="ic"><use href="#i-abc"/></svg></button>
                <i class="sep"></i>
                <button class="tbt clip"><svg class="ic"><use href="#i-clip"/></svg>Clipboard<svg class="tri"><use href="#i-tri"/></svg></button>
                <span class="tb-label empty">[ Empty ]</span>
                <i class="sep"></i>
                <button class="tbt extend"><svg class="ic"><use href="#i-extend"/></svg>Extend<svg class="tri"><use href="#i-tri"/></svg></button>
                <button class="tbt selby"><svg class="ic"><use href="#i-selby"/></svg>Select By<svg class="tri"><use href="#i-tri"/></svg></button>
                <button class="tbt convert"><svg class="ic"><use href="#i-convert"/></svg>Convert<svg class="tri"><use href="#i-tri"/></svg></button>
                <svg class="tri dark low"><use href="#i-tri"/></svg>
            </div>

            <div class="viewport">
                <div class="info">
                    <b>K: Copy of Copy of Copy of Nachbau aktuell 2 (Test)</b>
                    <span>Directional Deformation 23</span>
                    <span>Type: Directional Deformation(Y Axis)</span>
                    <span>Unit: mm</span>
                    <span>Global Coordinate System</span>
                    <span>Time: 1 s</span>
                    <span>24.03.2023 15:05</span>
                </div>
                <div class="legend">
                    <div class="bands"><i class="c1"></i><i class="c2"></i><i class="c3"></i><i class="c4"></i><i class="c5"></i><i class="c6"></i><i class="c7"></i><i class="c8"></i><i class="c9"></i></div>
                    <div class="values">
                        <b>0,00076495 Max</b>
                        <span>0,00069797</span>
                        <span>0,00063099</span>
                        <span>0,00056401</span>
                        <span>0,00049702</span>
                        <span>0,00043004</span>
                        <span>0,00036306</span>
                        <span>0,00029608</span>
                        <span>0,0002291</span>
                        <b>0,00016212 Min</b>
                    </div>
                </div>
                <div class="brand"><b>Ansys</b><span>2021 R2</span></div>

                <svg class="model" viewBox="0 0 840 690">
                    <defs>
                        <linearGradient id="body" x1="0" y1="0" x2="0" y2="1"><stop offset="0" stop-color="#a2b0cc"/><stop offset=".6" stop-color="#adb6c6"/><stop offset="1" stop-color="#b4b9c4"/></linearGradient>
                        <pattern id="mesh" width="23" height="35" patternUnits="userSpaceOnUse" patternTransform="translate(656 262) skewY(40)"><path d="M0 0v35M0 0h23" fill="none" stroke="#000" stroke-width="5"/></pattern>
                        <clipPath id="core"><ellipse rx="82" ry="194" transform="translate(658 271) rotate(-18.6)"/></clipPath>
                    </defs>
                    <path d="M586 54L98 226C40 240 36 350 85 484C130 596 190 650 234 638L730 488z" fill="url(#body)"/>
                    <g transform="translate(658 271) rotate(-18.6)">
                        <ellipse rx="101" ry="228" fill="#1414f0"/>
                        <ellipse rx="96" ry="221" fill="#00b0f0"/>
                        <ellipse rx="91" ry="212" fill="#00e0c8"/>
                        <ellipse rx="82" ry="194" fill="#00dc00"/>
                        <ellipse rx="70" ry="166" fill="#98e000"/>
                        <ellipse rx="58" ry="138" fill="#e6e600"/>
                        <ellipse rx="46" ry="108" fill="#e69a00"/>
                        <ellipse rx="34" ry="80" fill="#e00000"/>
                        <ellipse rx="91" ry="211" fill="none" stroke="#000" stroke-width="26" stroke-dasharray="3 25"/>
                        <ellipse rx="101" ry="228" fill="none" stroke="#001050" stroke-width="4"/>
                    </g>
                    <g clip-path="url(#core)"><path d="M500 40h320v470H500z" fill="url(#mesh)"/></g>
                </svg>

                <svg class="ruler" viewBox="0 0 540 56">
                    <path d="M40 26.5h443v9H40z" fill="#fff" stroke="#000"/>
                    <path d="M40 26h110v10H40zM261 26h112v10H261z"/>
                    <g text-anchor="middle" font-size="13"><text x="40" y="21">0,000</text><text x="261" y="21">15,000</text><text x="150" y="52">7,500</text><text x="373" y="52">22,500</text></g>
                    <text x="462" y="21" font-size="13">30,000 (mm)</text>
                </svg>

                <svg class="triad" viewBox="120 1260 480 270">
                    <defs><radialGradient id="ball" cx=".4" cy=".4"><stop offset="0" stop-color="#1cd8d8"/><stop offset="1" stop-color="#067c7c"/></radialGradient></defs>
                    <path d="M388 1280L230 1332" stroke="#0a5c0a" stroke-width="13"/>
                    <path d="M177 1346l42-38q20 20 14 45z" fill="#064006"/><path d="M219 1308q24-2 20 20l-4 26-12-2q8-24-4-44z" fill="#0a9a0a"/>
                    <path d="M396 1282l90 64" stroke="#0a0ac8" stroke-width="13"/>
                    <path d="M470 1350q10-24 40-18l14 44-42-6q-12-6-12-20z" fill="#04047c"/>
                    <circle cx="355" cy="1453" r="25" fill="url(#ball)"/>
                    <path d="M391 1276l3 160" stroke="#d40606" stroke-width="15"/>
                    <path d="M372 1438q24-18 48 0l-20 50z" fill="#c00404"/>
                    <g font-size="42"><text x="138" y="1358" fill="#00aa00">Y</text><text x="543" y="1390" fill="#3333ff">Z</text><text x="398" y="1526" fill="#ff2222">X</text></g>
                </svg>
            </div>

            <div class="bottom">
                <div class="graph">
                    <div class="panel-head"><span>Graph</span><span class="dots"></span><svg class="tri dark"><use href="#i-tri"/></svg><svg class="pin"><use href="#i-pin"/></svg><svg class="box"><use href="#i-box"/></svg><svg class="x"><use href="#i-x"/></svg></div>
                    <div class="toolbar anim">
                        <i class="grip"></i>
                        <span class="anim-label">Animation</span>
                        <button class="tb"><svg class="ic"><use href="#i-first"/></svg></button>
                        <button class="tb"><svg class="ic"><use href="#i-play"/></svg></button>
                        <button class="tb sel"><svg class="ic"><use href="#i-stop"/></svg></button>
                        <button class="tb"><svg class="ic"><use href="#i-last"/></svg></button>
                        <i class="sep"></i>
                        <button class="tb sel green"><svg class="ic"><use href="#i-frames"/></svg></button>
                        <button class="tb blue"><svg class="ic"><use href="#i-frames"/></svg></button>
                        <i class="sep"></i>
                        <span class="combo w125"><select aria-label="Frames"><option>20 Frames</option></select></span>
                        <span class="combo w125"><select aria-label="Duration"><option>2 Sec (Auto)</option></select></span>
                        <button class="tb save"><svg class="ic"><use href="#i-film"/></svg></button>
                        <i class="sep"></i>
                        <button class="tb"><svg class="ic"><use href="#i-zplay"/></svg></button>
                        <button class="tb"><svg class="ic"><use href="#i-rgb"/></svg></button>
                        <button class="tb"><svg class="ic"><use href="#i-cam"/></svg></button>
                        <i class="sep"></i>
                        <button class="tb"><svg class="ic"><use href="#i-key"/></svg></button>
                        <button class="tb"><svg class="ic"><use href="#i-key"/></svg></button>
                        <i class="sep"></i>
                        <button class="tb"><svg class="ic"><use href="#i-wave"/></svg></button>
                        <span class="more"><svg class="chevs"><use href="#i-chevs"/></svg><svg class="tri dark"><use href="#i-tri"/></svg></span>
                    </div>
                    <div class="plot">
                        <b class="ylab">[mm]</b>
                        <div class="yticks"></div>
                        <div class="axes">
                            <div class="area"><i class="pt max"></i><i class="pt avg"></i><i class="pt min"></i></div>
                            <div class="xticks"><i></i><i></i><i></i><i></i><i></i><i></i><i></i><i></i><i></i><i></i></div>
                            <b class="xlab">[s]</b>
                            <div class="timebar"></div>
                        </div>
                    </div>
                    <div class="btabs"><button class="btab">Messages</button><button class="btab active">Graph</button></div>
                </div>
                <div class="tabular">
                    <div class="panel-head"><span>Tabular Data</span><span class="dots"></span><svg class="tri dark"><use href="#i-tri"/></svg><svg class="pin"><use href="#i-pin"/></svg><svg class="box"><use href="#i-box"/></svg></div>
                    <table class="data">
                        <tr>
                            <th class="n"></th>
                            <th class="t">Time [s]</th>
                            <th class="m red"><label><input type="checkbox" checked>Minimum [mm]</label></th>
                            <th class="m grn"><label><input type="checkbox" checked>Maximum [mm]</label></th>
                            <th class="a blu"><label><input type="checkbox" checked>Average [mm]</label></th>
                        </tr>
                        <tr><th>1</th><td>1,</td><td>1,6212e-004</td><td>7,6495e-004</td><td>4,572e-004</td></tr>
                    </table>
                </div>
            </div>
        </section>
    </main>

    <script>
        const tree = document.getElementById('tree');
        const icon = (id, cls) => `<svg class="${cls}"><use href="#${id}"/></svg>`;

        function addRow(label, id, cls, sign) {
            const li = document.createElement('li');
            li.className = cls;
            li.innerHTML = `<i class="twig">${sign ? `<button class="sign">${sign}</button>` : ''}</i>` +
                icon('i-check', 'ok') + icon(id, 'ic') + `<span>${label}</span>`;
            tree.appendChild(li);
        }

        for (let i = 0; i < 17; i++) {
            addRow('Directional Deformation', 'i-def', i === 16 ? 'current' : '', '');
        }
        addRow('Bolt Tool', 'i-bolttool', '', '−');
        addRow('Adjustment', 'i-adjust', 'child', '');
        addRow('Kopfseite', 'i-folder', '', '+');
        addRow('Mitte', 'i-folder', '', '+');
    </script>
</body>
</html>
```
FILE: styles.css
```css
* {
    margin: 0;
    padding: 0;
    box-sizing: border-box;
}

body {
    height: 100vh;
    display: flex;
    flex-direction: column;
    overflow: hidden;
    background: #eeeef2;
    color: #222;
    font: 13px/18px "Open Sans", "Noto Sans", sans-serif;
}

button, input, select {
    font: inherit;
    color: inherit;
    background: none;
    border: none;
    border-radius: 0;
}

button {
    white-space: nowrap;
}

button:disabled {
    color: #a0a0a0;
}

svg {
    display: block;
    flex: none;
}

.sprite {
    display: none;
}

.ic {
    width: 18px;
    height: 18px;
}

.tri {
    width: 8px;
    height: 5px;
    color: #777;
}

.tri.dark {
    width: 10px;
    height: 6px;
    color: #222;
}

.spacer {
    flex: 1;
}

/* Title and tabs */
.app-header, .ribbon, .toolbar, .info {
    font-size: 14px;
}

.title-row {
    height: 13px;
    display: flex;
    align-items: flex-end;
    color: #555;
}

.title-row span {
    padding-bottom: 5px;
}

.title-row .context {
    width: 73px;
    margin-left: 79px;
    text-align: center;
    background: #d5e0f2;
    color: #4a72c4;
}

.title-row .title {
    white-space: nowrap;
    margin-left: 427px;
    margin-right: auto;
}

.title-row .win {
    display: flex;
    gap: 32px;
    width: 90px;
    height: 13px;
    overflow: hidden;
}

.win-min {
    width: 11px;
    height: 1px;
    background: #999;
}

.win-max {
    width: 9px;
    height: 5px;
    border: 1px solid #333;
    border-top: none;
}

.win-close {
    width: 4px;
    height: 2px;
    background: #333;
}

.tabs-row {
    height: 30px;
    display: flex;
    align-items: center;
    border-bottom: 1px solid #cfcfd6;
}

.rtab {
    height: 30px;
    padding: 0 18px;
}

.rtab.home {
    width: 79px;
    padding: 0;
}

.rtab.active {
    width: 73px;
    padding: 0;
    background: #fafafa;
    border: 1px solid #cfcfd6;
    border-bottom: none;
    height: 31px;
}

.quick {
    width: 199px;
    height: 26px;
    padding: 0 5px;
    background: #fff;
    border: 1px solid #cfd0e2;
}

::placeholder {
    color: #a5a5a5;
    opacity: 1;
}

.up {
    width: 14px;
    height: 10px;
    margin: 0 11px 0 6px;
}

.help {
    width: 7px;
    height: 20px;
    margin-left: 9px;
    background: #4c94ee;
    border-radius: 10px 0 0 10px;
}

/* Ribbon */
.ribbon {
    display: flex;
    height: 107px;
    padding-top: 5px;
    background: #fafafa;
}

.group {
    height: 93px;
    border-right: 1px solid #d0d0d6;
    flex: none;
}

.g-body {
    display: flex;
    height: 79px;
}

.g-stack {
    flex-direction: column;
    gap: 18px;
    padding: 11px 5px;
}

.g-label {
    height: 14px;
    line-height: 14px;
    display: flex;
    justify-content: center;
}

.launcher {
    width: 7px;
    height: 7px;
    margin: 6px 0 0 1px;
    border: 1px solid #888;
    border-right-width: 3px;
    border-bottom-width: 3px;
}

.g-tools { width: 35px; }
.g-tools .g-label { justify-content: flex-start; }
.g-solver { width: 66px; }
.g-solver .big { width: 65px; }
.g-insert { width: 440px; }
.g-insert .g-body { padding-left: 6px; }
.g-display { width: 538px; }
.g-display .g-body { padding-left: 7px; }
.g-vector { width: 513px; }
.g-vector .g-body { padding-left: 5px; }
.g-capped { width: 86px; }
.g-views { width: 56px; }
.g-capped .big, .g-views .big { width: 100%; }

.w36 { width: 36px; }
.w56 { width: 56px; }
.w61 { width: 61px; }
.w64 { width: 64px; }
.w65 { width: 65px; }
.w68 { width: 68px; }
.w90 { width: 90px; }
.w101 { width: 101px; }
.w112 { width: 112px; }
.w125 { width: 125px; }
.w126 { width: 126px; }
.w135 { width: 135px; }
.w150 { width: 150px; }
.w174 { width: 174px; }

.big {
    display: flex;
    flex-direction: column;
    align-items: center;
    line-height: 22px;
}

.big .pic {
    height: 44px;
    display: flex;
    align-items: center;
}

.big .pic.short {
    padding-bottom: 8px;
}

.big > .tri {
    margin-top: 5px;
}

.big.two {
    line-height: 14px;
}

.big.two .pic {
    height: 48px;
    padding-bottom: 12px;
}

.big.two .tri {
    display: inline-block;
    vertical-align: 4px;
    margin-left: 2px;
}

.col {
    display: flex;
    flex-direction: column;
    flex: none;
}

.cmd {
    height: 26px;
    display: flex;
    align-items: center;
    gap: 3px;
    padding-left: 3px;
}

.g-vector .cmd {
    padding-left: 5px;
}

.cmd.on {
    background: #f5f5f6;
}

.cmd.fit {
    width: 99px;
}

.vline {
    width: 1px;
    height: 79px;
    margin: 0 3px 0 2px;
    background: #cdd2e2;
}

.combo {
    position: relative;
    height: 26px;
    flex: none;
}

.combo select {
    width: 100%;
    height: 100%;
    padding-left: 4px;
    appearance: none;
    background: #fff;
    border: 1px solid #d0d2e2;
}

.combo::after {
    content: "";
    position: absolute;
    right: 6px;
    top: 11px;
    border: 4px solid transparent;
    border-top: 5px solid #777;
    border-bottom: none;
    pointer-events: none;
}

.tick {
    height: 26px;
    display: flex;
    align-items: center;
    gap: 8px;
    padding-left: 3px;
    white-space: nowrap;
}

.tick input {
    appearance: none;
    width: 16px;
    height: 16px;
    background: #fff;
    border: 1px solid #c8cadb;
}

.tick input::after, .data input::after {
    content: "";
    display: block;
    width: 5px;
    height: 8px;
    margin: 1px 0 0 5px;
    border: solid #666;
    border-width: 0 2px 2px 0;
    transform: rotate(40deg);
}

.slider {
    appearance: none;
    width: 106px;
    height: 26px;
    margin-left: 10px;
}

.slider::-webkit-slider-runnable-track {
    height: 2px;
    background: #999;
}

.slider::-webkit-slider-thumb {
    appearance: none;
    width: 4px;
    height: 13px;
    margin-top: -5px;
    background: #fafafa;
    border: 1px solid #777;
    border-left: none;
    border-right-width: 2px;
}

/* Workspace */
.workspace {
    flex: 1;
    min-height: 0;
    display: flex;
    gap: 6px;
    border-top: 1px solid #cfcfd6;
}

.side {
    width: 232px;
    flex: none;
    display: flex;
    flex-direction: column;
}

.content {
    flex: 1;
    min-width: 0;
    display: flex;
    flex-direction: column;
}

.panel-head {
    height: 25px;
    flex: none;
    display: flex;
    align-items: center;
    color: #555;
    border-right: 1px solid #d5d5e0;
    padding-right: 9px;
}

.dots {
    flex: 1;
    height: 8px;
    margin-right: 6px;
    background-image: radial-gradient(circle, #bbb 1px, transparent 1px), radial-gradient(circle, #bbb 1px, transparent 1px);
    background-size: 4px 6px;
    background-position: 0 0, 2px 3px;
}

.pin {
    width: 12px;
    height: 15px;
    margin: 0 8px;
}

.box {
    width: 14px;
    height: 13px;
}

.x {
    width: 11px;
    height: 11px;
    margin-left: 8px;
}

.outline-bar {
    height: 33px;
    flex: none;
    display: flex;
    align-items: center;
}

.outline-bar .filter {
    width: 77px;
    height: 28px;
}

.outline-bar input {
    width: 113px;
    height: 28px;
    padding: 0 5px;
    background: #fff;
    border: 1px solid #d0d2e2;
    font-size: 14px;
}

.more {
    display: flex;
    flex-direction: column;
    align-items: center;
    gap: 6px;
    margin-left: auto;
    margin-right: 5px;
}

.more .tri.dark {
    width: 8px;
    height: 5px;
}

.chevs {
    width: 8px;
    height: 8px;
}

.tree-wrap {
    display: flex;
    height: 419px;
    flex: none;
}

.tree {
    flex: 1;
    overflow: hidden;
    background: #fff;
    list-style: none;
}

.tree li {
    height: 20px;
    display: flex;
    align-items: center;
    white-space: nowrap;
    color: #111;
}

.tree li > span {
    padding: 0 2px;
    margin-left: 4px;
    line-height: 20px;
}

.tree li.current > span {
    background: #f0f0f0;
}

.tree .ic {
    margin-left: 1px;
}

.twig {
    position: relative;
    width: 60px;
    height: 20px;
    flex: none;
}

.twig::before {
    content: "";
    position: absolute;
    left: 41px;
    top: 0;
    height: 20px;
    border-left: 1px dotted #888;
}

.twig::after {
    content: "";
    position: absolute;
    left: 42px;
    top: 10px;
    width: 18px;
    border-top: 1px dotted #888;
}

.child .twig {
    width: 94px;
}

.child .twig::after {
    left: 75px;
    top: 0;
    width: 18px;
    height: 11px;
    border-left: 1px dotted #888;
    border-top: none;
    border-bottom: 1px dotted #888;
}

.sign {
    position: absolute;
    z-index: 1;
    left: 36px;
    top: 5px;
    width: 11px;
    height: 11px;
    background: #fff;
    border: 1px solid #666;
    font-size: 12px;
    line-height: 8px;
    color: #000;
}

.ok {
    width: 10px;
    height: 12px;
    margin-top: 8px;
}

.vscroll {
    width: 20px;
    display: flex;
    flex-direction: column;
    align-items: center;
    background: #f0f0f0;
    padding: 10px 1px 8px 0;
}

.vscroll .thumb {
    width: 18px;
    background: #cdcdcd;
}

.chev {
    width: 7px;
    height: 7px;
    border: solid #555;
    border-width: 2px 0 0 2px;
}

.chev-up { transform: rotate(45deg); }
.chev-down { transform: rotate(225deg); margin-top: auto; }
.chev-right { transform: rotate(135deg); }

.tree-scroll .thumb {
    height: 117px;
    margin-top: 252px;
}

.details-scroll .thumb {
    height: 151px;
    margin-top: 4px;
}

.hscroll {
    height: 20px;
    flex: none;
    display: flex;
    align-items: center;
    justify-content: space-between;
    padding-right: 29px;
    background: #f0f0f0;
}

.hscroll .thumb {
    width: 115px;
    height: 20px;
    background: #cdcdcd;
}

.details-head {
    margin-top: 5px;
    border-top: 1px solid #d5d5e0;
}

.cut {
    flex: 1;
    overflow: hidden;
    white-space: nowrap;
    margin-right: 5px;
}

.details-wrap {
    flex: 1;
    display: flex;
    min-height: 0;
}

.details-box {
    flex: 1;
    background: #fff;
    border-top: 1px solid #a0a0a0;
    border-right: 1px solid #a0a0a0;
}

.details {
    width: 100%;
    height: 270px;
    table-layout: fixed;
    border-collapse: collapse;
    color: #111;
}

.details .name {
    width: 93px;
}

.details td, .details th {
    border-bottom: 1px solid #a0a0a0;
    text-align: left;
    white-space: nowrap;
    line-height: 18px;
}

.details td:first-child {
    border-right: 1px solid #a0a0a0;
}

.details td + td {
    padding-left: 4px;
}

.details .ind {
    padding-left: 3px;
}

.details .ro {
    background: #e8e6e1;
}

.details tr:first-child th {
    height: 22px;
}

.btabs {
    height: 15px;
    flex: none;
    display: flex;
    border-top: 1px solid #d0d2e2;
}

.btab {
    height: 19px;
    padding: 0 7px;
    border-right: 1px solid #d0d2e2;
    color: #555;
}

.btab.w36 {
    padding: 0;
    text-align: left;
}

.btab.active {
    color: #1a80d8;
    background: #f8f8fa;
}

/* Toolbars */
.toolbar {
    height: 33px;
    flex: none;
    display: flex;
    align-items: center;
    padding-left: 12px;
    border-bottom: 1px solid #d5d5e0;
}

.grip {
    width: 6px;
    height: 22px;
    margin-right: 8px;
    background-image: radial-gradient(circle, #bbb 1px, transparent 1px), radial-gradient(circle, #bbb 1px, transparent 1px);
    background-size: 6px 4px;
    background-position: 0 0, 3px 2px;
}

.tb {
    width: 28px;
    height: 27px;
    flex: none;
    display: flex;
    align-items: center;
    justify-content: center;
}

.tb.sel {
    border: 1px solid #4a9df0;
    background: #f4f7fb;
}

.tb.wide {
    width: 42px;
    gap: 6px;
}

.sep {
    width: 1px;
    height: 25px;
    flex: none;
    margin: 0 3px;
    background: #d0d2de;
}

.tbt {
    flex: none;
    display: flex;
    align-items: center;
    gap: 3px;
}

.tb-label {
    margin-left: 3px;
}

.mode { margin: 0 7px 0 9px; }
.clip { margin-left: 2px; }
.empty { margin: 0 6px 0 14px; }
.extend { margin-left: 5px; }
.selby, .convert { margin-left: 15px; }

.low {
    margin: 12px 0 0 12px;
}

/* Graphics window */
.viewport {
    position: relative;
    flex: 1;
    overflow: hidden;
    background: linear-gradient(#6b8bde, #ffffff);
    color: #000;
}

.info {
    padding: 17px 18px 0;
    display: flex;
    flex-direction: column;
    line-height: 19px;
}

.legend {
    display: flex;
    gap: 10px;
    margin-left: 18px;
    padding-top: 14px;
}

.bands {
    width: 20px;
    height: 191px;
    margin-top: 11px;
    display: flex;
    flex-direction: column;
    border: 1px solid #000;
    border-top-width: 3px;
}

.bands i {
    flex: 1;
    border-bottom: 1px solid #000;
}

.c1 { background: #ff0000; }
.c2 { background: #ffb000; }
.c3 { background: #ffff00; }
.c4 { background: #b0ff00; }
.c5 { background: #00ff00; }
.c6 { background: #00ffb0; }
.c7 { background: #00ffff; }
.c8 { background: #00b0ff; }
.c9 { background: #0000ff; }

.values {
    display: flex;
    flex-direction: column;
    line-height: 21px;
}

.values b {
    font-size: 14px;
}

.brand {
    position: absolute;
    top: 24px;
    right: -4px;
    color: #fff;
    text-align: right;
    font: 500 22px/24px Inter, sans-serif;
}

.brand b {
    display: block;
    font-size: 38px;
    font-weight: 800;
    line-height: 44px;
}

.model {
    position: absolute;
    left: 872px;
    top: 216px;
    width: 280px;
    height: 230px;
}

.ruler {
    position: absolute;
    left: 541px;
    bottom: 20px;
    width: 540px;
    height: 56px;
}

.triad {
    position: absolute;
    right: 22px;
    bottom: 20px;
    width: 160px;
    height: 90px;
}

/* Bottom panels */
.bottom {
    height: 219px;
    flex: none;
    margin-top: 6px;
    display: grid;
    grid-template-columns: 800fr 778fr;
    gap: 6px;
}

.bottom .panel-head {
    padding-left: 6px;
    padding-bottom: 2px;
    border-top: 1px solid #d5d5e0;
}

.bottom .dots {
    margin-left: 6px;
}

.graph, .tabular {
    display: flex;
    flex-direction: column;
    min-width: 0;
}

.anim-label {
    margin: 0 6px;
    color: #444;
}

.anim .combo {
    height: 28px;
}

.green { color: #3c3; }
.blue { color: #28e; }
.save { margin-left: 7px; }

.plot {
    flex: 1;
    display: flex;
    padding: 30px 29px 0 27px;
    background: #fff;
    color: #000;
}

.ylab {
    width: 20px;
    height: 42px;
    writing-mode: vertical-rl;
    transform: rotate(180deg);
    margin-top: -10px;
    font-size: 15px;
    line-height: 20px;
}

.yticks {
    width: 10px;
    height: 30px;
    margin-left: 6px;
    background: repeating-linear-gradient(#bbb 0 1px, transparent 1px 4px);
}

.axes {
    flex: 1;
    display: flex;
    flex-direction: column;
}

.area {
    position: relative;
    height: 30px;
    border: 1px solid #aaa;
    border-left: none;
}

.pt {
    position: absolute;
    left: -1px;
    width: 4px;
    height: 4px;
}

.pt.max { top: -2px; background: #0a8a0a; }
.pt.avg { top: 13px; background: #00c; }
.pt.min { bottom: -2px; background: #c00; }

.xticks {
    display: flex;
    height: 9px;
    border-right: 1px solid #aaa;
}

.xticks i {
    flex: 1;
    border-left: 1px solid #aaa;
}

.xlab {
    text-align: center;
    font-size: 15px;
    line-height: 20px;
    margin: 15px 0 8px;
}

.timebar {
    height: 18px;
    border: 1px solid #aaa;
}

.tabular {
    background: #a0a0a0;
}

.tabular .panel-head {
    background: #eeeef2;
    border-right: none;
    padding-right: 6px;
}

.data {
    align-self: flex-start;
    border-collapse: separate;
    border-spacing: 0;
    color: #111;
    background: #e8e6e1;
}

.data th {
    height: 22px;
    font-weight: normal;
    background: #f0f0f0;
    border-right: 1px solid #777;
    border-bottom: 1px solid #777;
}

.data td {
    height: 19px;
    padding-left: 4px;
    border-right: 1px solid #d0d0d0;
    border-bottom: 1px solid #ccc;
}

.data tr + tr th {
    height: 19px;
}

.data .n { width: 18px; }
.data .t { width: 58px; }
.data .m { width: 129px; }
.data .a { width: 122px; }
.data .red { color: #c8102e; }
.data .grn { color: #149014; }
.data .blu { color: #1414d8; }

.data label {
    display: flex;
    align-items: center;
    gap: 6px;
    padding-left: 4px;
    white-space: nowrap;
}

.data input {
    appearance: none;
    width: 17px;
    height: 17px;
    background: #fff;
    border: 2px solid #777;
    border-right: none;
    border-bottom: none;
}

.data input::after {
    border-color: #000;
}
```
